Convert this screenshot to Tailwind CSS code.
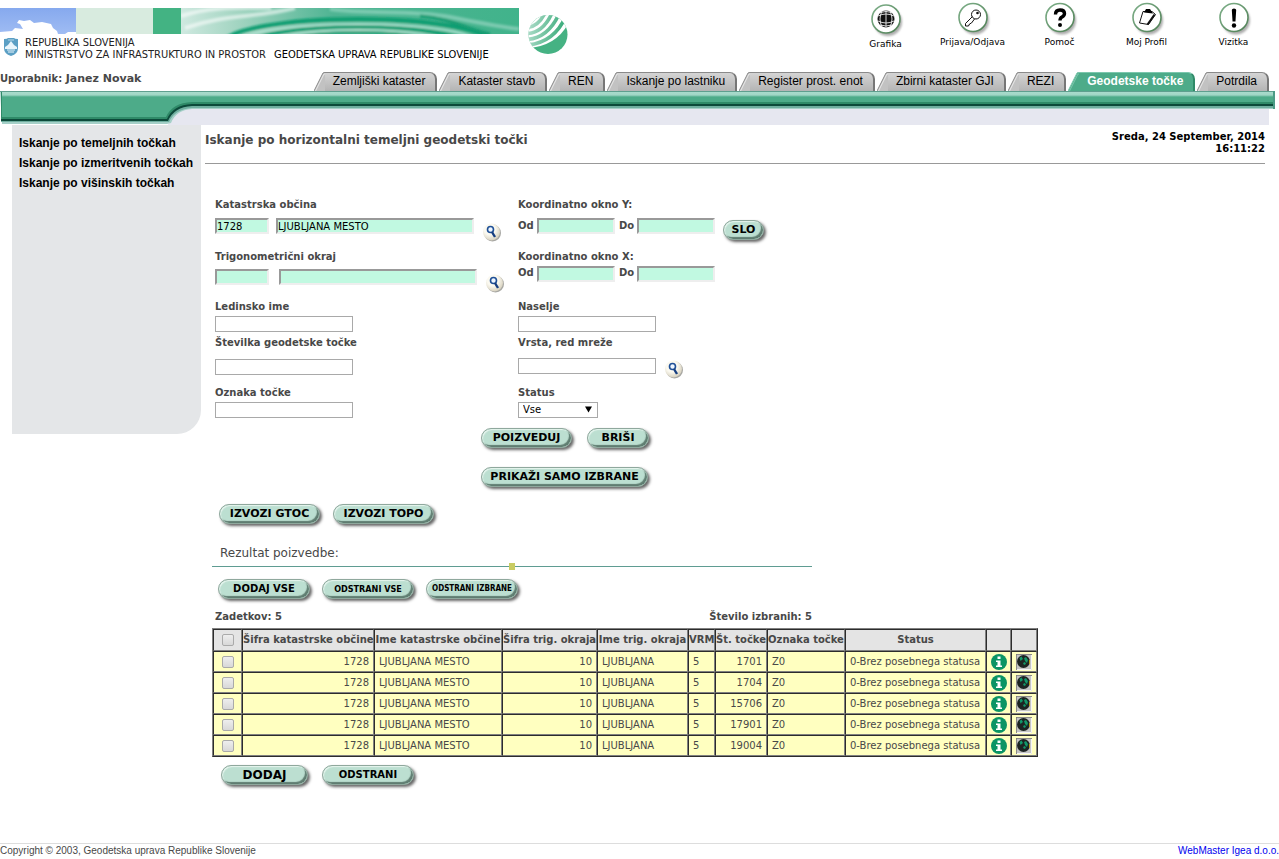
<!DOCTYPE html>
<html lang="sl">

<head>
    <meta charset="utf-8" />
    <meta content="width=device-width, initial-scale=1.0" name="viewport" />
    <title>Geodetske točke</title>
    <script src="https://cdn.jsdelivr.net/npm/@tailwindcss/browser@4"></script>
</head>

<body class="bg-white text-[#484848] font-['Verdana','DejaVu_Sans',sans-serif] text-[10px] leading-[14px]">
    <!-- Shared icons -->
    <svg class="absolute h-0 w-0">
        <defs>
            <linearGradient id="btnRing" x1="0" y1="0" x2="1" y2="1">
                <stop offset="0" stop-color="#7fb08a" />
                <stop offset="1" stop-color="#4f8055" />
            </linearGradient>
            <radialGradient id="lens" cx=".4" cy=".35" r=".65">
                <stop offset=".5" stop-color="#fbf9f0" />
                <stop offset="1" stop-color="#d8d2c0" />
            </radialGradient>
            <filter id="soft"><feGaussianBlur stdDeviation="1" /></filter>
        </defs>
        <symbol id="ic-search" viewBox="0 0 20 20">
            <circle cx="10.500" cy="11" r="8.500" fill="#8a8a84" opacity=".75" />
            <circle cx="9.500" cy="10" r="8.500" fill="url(#lens)" />
            <circle cx="8.500" cy="7.500" r="3" fill="#eef6ff" stroke="#1f4f96" stroke-width="1.600" />
            <path d="M10 10l3 5" stroke="#173f80" stroke-width="2.400" />
        </symbol>
        <symbol id="ic-info" viewBox="0 0 16 16">
            <circle cx="8" cy="8" r="8" fill="#0a9464" />
            <path d="M6.500 2.500h3v2.500h-3zM5 6.500h4.500v5H11V13H5v-1.500h1.500V8H5z" fill="#fff" />
        </symbol>
        <symbol id="ic-map" viewBox="0 0 16 16">
            <path d="M0 0h16v16H0z" fill="#c4c4c4" />
            <path d="M0 16V0h16" fill="none" stroke="#777" stroke-width="1.500" />
            <path d="M1 15.500h14.500V1" fill="none" stroke="#f4f4f4" />
            <circle cx="7.500" cy="7.500" r="6.500" fill="#1d2422" />
            <path d="M3.500 4l2-1.500L7 5 4.500 7zM8 4l2-1 2 3-1 3-2-2zM7 9l2-1 1 2-2 1z" fill="#13986a" />
            <path d="M13.500 6v4" stroke="#b4a020" />
        </symbol>
    </svg>

    <div class="flex min-h-screen flex-col">
        <header>
            <div class="flex h-[72px] items-start justify-between pt-[2px] pr-[2px]">
                <div class="flex pt-[6px]">
                    <div class="w-[519px]">
                        <svg class="block h-[26px] w-full" viewBox="0 0 519 26">
                            <defs>
                                <linearGradient id="sky" x1="0" y1="0" x2="0" y2="1">
                                    <stop offset="0" stop-color="#86a9ee" />
                                    <stop offset="1" stop-color="#9fbcf3" />
                                </linearGradient>
                                <linearGradient id="water" x1="0" y1="0" x2="1" y2="0">
                                    <stop offset="0" stop-color="#cfe9e0" />
                                    <stop offset=".18" stop-color="#9fd3bf" />
                                    <stop offset=".45" stop-color="#4fb493" />
                                    <stop offset="1" stop-color="#41b38b" />
                                </linearGradient>
                                <clipPath id="waterClip"><path d="M181 0h338v26H181z" /></clipPath>
                            </defs>
                            <path d="M0 0h76v26H0z" fill="url(#sky)" />
                            <path d="M0 26v-2l12-1 3-3 8 1-3-5-3-1 2-3 5 1 6-1 4 3 8-1 9 2 2 4 4 3 1 3 8 1v1z" fill="#fff" />
                            <path d="M65 26l3-2h8v2z" fill="#fff" />
                            <path d="M76 0h77v26H76z" fill="#d8ebdf" />
                            <path d="M153 0h28v26h-28z" fill="#43b383" />
                            <path d="M181 0h338v26H181z" fill="url(#water)" />
                            <g clip-path="url(#waterClip)" fill="none">
                                <g filter="url(#soft)">
                                    <path d="M181 8c30-10 60-8 90-8M185 20c40-14 70-10 110-20" stroke="#fff" stroke-opacity=".55" stroke-width="4" />
                                    <path d="M330 1c40 6 80 0 120 8s50 10 69 12" stroke="#7bcab0" stroke-width="4" />
                                    <ellipse cx="358" cy="36" rx="135" ry="25" stroke="#0f9d71" stroke-width="4" />
                                    <ellipse cx="358" cy="36" rx="122" ry="20" stroke="#b5e3d3" stroke-width="2" />
                                    <ellipse cx="358" cy="36" rx="108" ry="17" stroke="#0f9d71" stroke-width="3" />
                                    <ellipse cx="358" cy="36" rx="90" ry="14" stroke="#b5e3d3" stroke-width="2" />
                                    <ellipse cx="358" cy="36" rx="76" ry="12" stroke="#139b70" stroke-width="2" />
                                    <path d="M420 8c30 2 50 14 70 18" stroke="#159c72" stroke-width="3" />
                                </g>
                            </g>
                        </svg>
                        <div class="flex pt-[3px] pl-[3px] font-['DejaVu_Sans_Condensed','DejaVu_Sans',sans-serif] text-[11px] leading-[12px] text-[#222]">
                            <svg class="mr-[6px] h-[20px] w-[16px] shrink-0" viewBox="0 0 16 20">
                                <path d="M1 2q3.500 0 4-1h6q.5 1 4 1v9q0 6-7 8-7-2-7-8z" fill="#5b9fc4" />
                                <path d="M2 10l3-2 3-4 3 4 3 2v2H2z" fill="#e9f5fb" />
                                <path d="M4 13h8M5 15h6" stroke="#e9f5fb" />
                                <path d="M5 3h6" stroke="#b6d8e8" />
                            </svg>
                            <div class="flex items-end whitespace-nowrap">
                                <div>REPUBLIKA SLOVENIJA<br />MINISTRSTVO ZA INFRASTRUKTURO IN PROSTOR</div>
                                <div class="ml-[8px] text-black">GEODETSKA UPRAVA REPUBLIKE SLOVENIJE</div>
                            </div>
                        </div>
                    </div>
                    <svg class="mt-[6px] ml-[9px] h-[41px] w-[40px]" viewBox="0 0 40 41">
                        <defs>
                            <clipPath id="ball"><circle cx="20" cy="20.500" r="19.500" /></clipPath>
                            <linearGradient id="stripe" gradientUnits="userSpaceOnUse" x1="2" y1="8" x2="34" y2="14">
                                <stop offset="0" stop-color="#a9dac6" />
                                <stop offset="1" stop-color="#3fae7e" />
                            </linearGradient>
                        </defs>
                        <g clip-path="url(#ball)">
                            <path d="M0 0h40v41H0z" fill="#45b283" />
                            <path d="M42 6Q30 32 0 34V0h42z" fill="#fff" />
                            <g fill="none" stroke="url(#stripe)" stroke-width="3.600">
                                <path d="M-1 31Q26 29 38 2" />
                                <path d="M-1 25.500Q20 24 31 0" />
                                <path d="M-1 19.500Q15 19 24 -1" />
                                <path d="M-1 13.500Q10 13 17 -1" />
                            </g>
                        </g>
                    </svg>
                </div>

                <nav class="flex text-center font-['DejaVu_Sans',sans-serif] text-[9px] leading-[12px] text-black">
                    <a href="#" class="flex w-[87px] flex-col items-center">
                        <svg class="h-[36px] w-[36px]" viewBox="0 0 36 36">
                            <circle cx="20" cy="20" r="14" fill="#777" opacity=".6" filter="url(#soft)" />
                            <circle cx="18" cy="17" r="14" fill="#fff" stroke="url(#btnRing)" stroke-width="1.600" />
                            <circle cx="18" cy="17" r="8.500" fill="#111" />
                            <path d="M10 14q8-4 16 0M10 19q8 4 16 0M12 10.500q6-2 12 0M12 23q6 2 12 0M18 8.500v17M14 9q-4 8 0 16M22 9q4 8 0 16" fill="none" stroke="#eee" stroke-width=".9" />
                        </svg>
                        Grafika
                    </a>
                    <a href="#" class="flex w-[87px] flex-col items-center">
                        <svg class="h-[34px] w-[36px]" viewBox="0 0 36 34">
                            <circle cx="20" cy="18.500" r="14" fill="#777" opacity=".6" filter="url(#soft)" />
                            <circle cx="18" cy="15.500" r="14" fill="#fff" stroke="url(#btnRing)" stroke-width="1.600" />
                            <circle cx="21" cy="12.500" r="4.500" fill="none" stroke="#111" />
                            <circle cx="22.500" cy="11" r="1.300" fill="#111" />
                            <path d="M17.500 14.500l-7 7v2.500h3l1-2 2-1 3-4" fill="none" stroke="#111" />
                        </svg>
                        Prijava/Odjava
                    </a>
                    <a href="#" class="flex w-[87px] flex-col items-center">
                        <svg class="h-[34px] w-[36px]" viewBox="0 0 36 34">
                            <circle cx="20" cy="18.500" r="14" fill="#777" opacity=".6" filter="url(#soft)" />
                            <circle cx="18" cy="15.500" r="14" fill="#fff" stroke="url(#btnRing)" stroke-width="1.600" />
                            <path d="M13.500 12.500q0-4.500 4.500-4.500t4.500 3.500q0 2-2.500 3.500-2 1-2 3.500" fill="none" stroke="#000" stroke-width="3.400" />
                            <circle cx="18" cy="23" r="2" />
                        </svg>
                        Pomoč
                    </a>
                    <a href="#" class="flex w-[87px] flex-col items-center">
                        <svg class="h-[34px] w-[36px]" viewBox="0 0 36 34">
                            <circle cx="20" cy="18.500" r="14" fill="#777" opacity=".6" filter="url(#soft)" />
                            <circle cx="18" cy="15.500" r="14" fill="#fff" stroke="url(#btnRing)" stroke-width="1.600" />
                            <path d="M14 9.500h9l3.500 3-7 10-9-1.500z" fill="#fff" stroke="#111" />
                            <path d="M15 10.500l2-3.500h4l3 4.500z" />
                            <path d="M25.500 12.500l-7 10" stroke="#111" stroke-width="2" />
                        </svg>
                        Moj Profil
                    </a>
                    <a href="#" class="flex w-[87px] flex-col items-center">
                        <svg class="h-[34px] w-[36px]" viewBox="0 0 36 34">
                            <circle cx="20" cy="18.500" r="14" fill="#777" opacity=".6" filter="url(#soft)" />
                            <circle cx="18" cy="15.500" r="14" fill="#fff" stroke="url(#btnRing)" stroke-width="1.600" />
                            <path d="M15.800 8q0-1.500 2.200-1.500T20.200 8l-.7 11.500h-3z" />
                            <circle cx="18" cy="23.500" r="2.200" />
                        </svg>
                        Vizitka
                    </a>
                </nav>
            </div>

            <div class="flex items-end justify-between pr-[10px]">
                <p class="pb-[5px] font-bold">Uporabnik: <span class="text-[11px]">Janez Novak</span></p>
                <nav id="tabs" class="flex gap-[2px] font-['Liberation_Sans',Arial,sans-serif] text-[12px] leading-[17px] text-black"></nav>
            </div>

            <!-- Green bar with the drop on the left -->
            <div class="flex pr-[4px]">
                <svg class="block h-[34px] w-[200px] shrink-0" viewBox="0 0 200 34">
                    <defs>
                        <linearGradient id="bar" gradientUnits="userSpaceOnUse" x1="0" y1="0" x2="0" y2="18">
                            <stop offset=".055" stop-color="#a9dbcc" />
                            <stop offset=".22" stop-color="#a0d6c5" />
                            <stop offset=".33" stop-color="#4dab89" />
                        </linearGradient>
                    </defs>
                    <path d="M168 34Q172 20 192 17h8v17z" fill="#e6e7f0" />
                    <path d="M0 0h200v18h-8q-16 1-21 14l-4 1H2z" fill="#a5d0c8" />
                    <path d="M1 1h199v16h-8q-17 1-23 14H1z" fill="#6fae9f" />
                    <path d="M1 1h199v14h-8q-18 1-24 15H1z" fill="#0c4a3a" />
                    <path d="M1 1h199v12h-8q-19 1-25 15H1z" fill="#2f8a68" />
                    <path d="M2 1h198v10h-8q-20 1-26 15H2z" fill="url(#bar)" />
                    <path d="M0 .5h200" stroke="#5f9f8f" />
                </svg>
                <div class="flex-1">
                    <div class="h-[18px] border-r-2 border-[#4b9b86] bg-[linear-gradient(#5f9f8f_0px,#5f9f8f_1px,#a9dbcc_1px,#a0d6c5_4px,#4dab89_6px,#4dab89_11px,#2f8a68_11px,#2f8a68_13px,#0c4a3a_13px,#0c4a3a_15px,#6fae9f_15px,#6fae9f_17px,#a5d0c8_17px)]"></div>
                    <div class="mr-[6px] h-[16px] bg-[#e6e7f0]"></div>
                </div>
            </div>
        </header>

        <div class="flex flex-1 items-start pl-[12px]">
            <aside class="h-[309px] w-[189px] shrink-0 rounded-br-[24px] bg-[#e4e6e8] pt-[8px] pl-[7px]">
                <ul class="font-['Liberation_Sans',Arial,sans-serif] text-[12px] leading-[20px] font-bold whitespace-nowrap text-black">
                    <li><a href="#">Iskanje po temeljnih točkah</a></li>
                    <li><a href="#">Iskanje po izmeritvenih točkah</a></li>
                    <li><a href="#">Iskanje po višinskih točkah</a></li>
                </ul>
            </aside>

            <main class="flex-1 pr-[14px] pl-[4px]">
                <div class="flex h-[39px] items-start justify-between border-b border-[#999] pt-[6px] font-bold">
                    <h1 class="text-[12px] leading-[18px]">Iskanje po horizontalni temeljni geodetski točki</h1>
                    <div class="text-right leading-[12px] text-black">Sreda, 24 September, 2014<br />16:11:22</div>
                </div>

                <form class="pt-[34px] pl-[10px]">
                    <div class="grid grid-cols-[303px_1fr] grid-rows-[52px_50px_36px_50px_42px] font-bold">
                        <div>
                            <label for="ko" class="block">Katastrska občina</label>
                            <div class="flex items-start pt-[6px]">
                                <input id="ko" value="1728" class="h-[16px] w-[54px] border-2 border-t-[#999] border-r-[#eee] border-b-[#eee] border-l-[#999] bg-[#c1f9e1] font-normal text-black" />
                                <input aria-label="Ime občine" value="LJUBLJANA MESTO" class="ml-[7px] h-[16px] w-[198px] border-2 border-t-[#999] border-r-[#eee] border-b-[#eee] border-l-[#999] bg-[#c1f9e1] font-normal text-black" />
                                <button type="button" aria-label="Išči" class="mt-[4px] ml-[8px]"><svg class="block h-[20px] w-[20px]"><use href="#ic-search" /></svg></button>
                            </div>
                        </div>
                        <div>
                            <label for="yod" class="block">Koordinatno okno Y:</label>
                            <div class="flex items-start pt-[6px]">
                                <label for="yod" class="w-[19px] leading-[16px]">Od</label>
                                <input id="yod" class="h-[16px] w-[78px] border-2 border-t-[#999] border-r-[#eee] border-b-[#eee] border-l-[#999] bg-[#c1f9e1] font-normal text-black" />
                                <label for="ydo" class="w-[22px] pl-[4px] leading-[16px]">Do</label>
                                <input id="ydo" class="h-[16px] w-[78px] border-2 border-t-[#999] border-r-[#eee] border-b-[#eee] border-l-[#999] bg-[#c1f9e1] font-normal text-black" />
                                <button type="button" class="mt-[2px] ml-[8px] h-[20px] w-[41px] rounded-full border border-[#8fa89d] bg-[#bcdfd1] text-[11px] leading-[18px] font-bold text-black shadow-[2px_2px_3px_#666,inset_1px_1px_1px_#e6f5ee,inset_-2px_-2px_1px_#5f7d71]">SLO</button>
                            </div>
                        </div>
                        <div>
                            <label for="to" class="block">Trigonometrični okraj</label>
                            <div class="flex items-start pt-[5px]">
                                <input id="to" class="h-[16px] w-[54px] border-2 border-t-[#999] border-r-[#eee] border-b-[#eee] border-l-[#999] bg-[#c1f9e1] font-normal text-black" />
                                <input aria-label="Ime okraja" class="ml-[10px] h-[16px] w-[198px] border-2 border-t-[#999] border-r-[#eee] border-b-[#eee] border-l-[#999] bg-[#c1f9e1] font-normal text-black" />
                                <button type="button" aria-label="Išči" class="mt-[4px] ml-[8px]"><svg class="block h-[20px] w-[20px]"><use href="#ic-search" /></svg></button>
                            </div>
                        </div>
                        <div>
                            <label for="xod" class="block">Koordinatno okno X:</label>
                            <div class="flex items-start pt-[2px]">
                                <label for="xod" class="w-[19px]">Od</label>
                                <input id="xod" class="h-[16px] w-[78px] border-2 border-t-[#999] border-r-[#eee] border-b-[#eee] border-l-[#999] bg-[#c1f9e1] font-normal text-black" />
                                <label for="xdo" class="w-[22px] pl-[4px]">Do</label>
                                <input id="xdo" class="h-[16px] w-[78px] border-2 border-t-[#999] border-r-[#eee] border-b-[#eee] border-l-[#999] bg-[#c1f9e1] font-normal text-black" />
                            </div>
                        </div>
                        <div>
                            <label for="li" class="block">Ledinsko ime</label>
                            <input id="li" class="mt-[2px] block h-[16px] w-[138px] border border-[#a9a9a9] bg-white font-normal text-black" />
                        </div>
                        <div>
                            <label for="na" class="block">Naselje</label>
                            <input id="na" class="mt-[2px] block h-[16px] w-[138px] border border-[#a9a9a9] bg-white font-normal text-black" />
                        </div>
                        <div>
                            <label for="sg" class="block">Številka geodetske točke</label>
                            <input id="sg" class="mt-[9px] block h-[16px] w-[138px] border border-[#a9a9a9] bg-white font-normal text-black" />
                        </div>
                        <div>
                            <label for="vr" class="block">Vrsta, red mreže</label>
                            <div class="flex items-start pt-[8px]">
                                <input id="vr" class="block h-[16px] w-[138px] border border-[#a9a9a9] bg-white font-normal text-black" />
                                <button type="button" aria-label="Išči" class="mt-[1px] ml-[8px]"><svg class="block h-[20px] w-[20px]"><use href="#ic-search" /></svg></button>
                            </div>
                        </div>
                        <div>
                            <label for="oz" class="block">Oznaka točke</label>
                            <input id="oz" class="mt-[2px] block h-[16px] w-[138px] border border-[#a9a9a9] bg-white font-normal text-black" />
                        </div>
                        <div>
                            <label for="st" class="block">Status</label>
                            <div class="relative mt-[2px] w-[80px]">
                                <select id="st" class="block h-[16px] w-full appearance-none border border-[#a9a9a9] bg-white pl-[4px] font-normal text-black">
                                    <option>Vse</option>
                                </select>
                                <svg class="pointer-events-none absolute top-[4px] right-[6px] h-[7px] w-[7px]" viewBox="0 0 8 7"><path d="M0 0h8L4 7z" /></svg>
                            </div>
                        </div>
                    </div>

                    <div class="flex gap-[15px] pl-[266px] text-[11px] leading-[18px] font-bold text-black">
                        <button type="button" class="h-[20px] w-[91px] rounded-full border border-[#8fa89d] bg-[#bcdfd1] shadow-[2px_2px_3px_#666,inset_1px_1px_1px_#e6f5ee,inset_-2px_-2px_1px_#5f7d71]">POIZVEDUJ</button>
                        <button type="button" class="h-[20px] w-[62px] rounded-full border border-[#8fa89d] bg-[#bcdfd1] shadow-[2px_2px_3px_#666,inset_1px_1px_1px_#e6f5ee,inset_-2px_-2px_1px_#5f7d71]">BRIŠI</button>
                    </div>
                    <div class="flex pt-[19px] pl-[266px] text-[11px] leading-[18px] font-bold text-black">
                        <button type="button" class="h-[20px] w-[167px] rounded-full border border-[#8fa89d] bg-[#bcdfd1] whitespace-nowrap shadow-[2px_2px_3px_#666,inset_1px_1px_1px_#e6f5ee,inset_-2px_-2px_1px_#5f7d71]">PRIKAŽI SAMO IZBRANE</button>
                    </div>
                    <div class="flex gap-[13px] pt-[17px] pl-[4px] text-[11px] leading-[18px] font-bold text-black">
                        <button type="button" class="h-[20px] w-[101px] rounded-full border border-[#8fa89d] bg-[#bcdfd1] whitespace-nowrap shadow-[2px_2px_3px_#666,inset_1px_1px_1px_#e6f5ee,inset_-2px_-2px_1px_#5f7d71]">IZVOZI GTOC</button>
                        <button type="button" class="h-[20px] w-[101px] rounded-full border border-[#8fa89d] bg-[#bcdfd1] whitespace-nowrap shadow-[2px_2px_3px_#666,inset_1px_1px_1px_#e6f5ee,inset_-2px_-2px_1px_#5f7d71]">IZVOZI TOPO</button>
                    </div>
                </form>

                <section class="pl-[7px]">
                    <div class="relative w-[600px] border-b border-[#5f9c92] pt-[21px] pb-[5px] pl-[8px]">
                        <h2 class="text-[12px] leading-[16px]">Rezultat poizvedbe:</h2>
                        <span class="absolute bottom-[-4px] left-1/2 ml-[-3px] h-[7px] w-[6px] bg-[#c9cc63]"></span>
                    </div>
                    <div class="flex gap-[12px] pt-[12px] pl-[6px] text-[9px] leading-[18px] font-bold text-black">
                        <button type="button" class="h-[20px] w-[92px] rounded-full border border-[#8fa89d] bg-[#bcdfd1] text-[10px] whitespace-nowrap shadow-[2px_2px_3px_#666,inset_1px_1px_1px_#e6f5ee,inset_-2px_-2px_1px_#5f7d71]">DODAJ VSE</button>
                        <button type="button" class="h-[20px] w-[92px] rounded-full border border-[#8fa89d] bg-[#bcdfd1] font-['DejaVu_Sans_Condensed','DejaVu_Sans',sans-serif] whitespace-nowrap shadow-[2px_2px_3px_#666,inset_1px_1px_1px_#e6f5ee,inset_-2px_-2px_1px_#5f7d71]">ODSTRANI VSE</button>
                        <button type="button" class="h-[20px] w-[92px] rounded-full border border-[#8fa89d] bg-[#bcdfd1] font-['DejaVu_Sans_Condensed','DejaVu_Sans',sans-serif] text-[8px] whitespace-nowrap shadow-[2px_2px_3px_#666,inset_1px_1px_1px_#e6f5ee,inset_-2px_-2px_1px_#5f7d71]">ODSTRANI IZBRANE</button>
                    </div>
                    <div class="flex w-[600px] items-end justify-between pt-[11px] pb-[4px] pl-[3px] font-bold">
                        <span>Zadetkov: 5</span>
                        <span>Število izbranih: 5</span>
                    </div>

                    <table class="w-[826px] table-fixed border-separate border-spacing-0 border border-t-[#808080] border-r-[#2c2c2c] border-b-[#2c2c2c] border-l-[#808080] whitespace-nowrap">
                        <colgroup>
                            <col class="w-[29px]" />
                            <col class="w-[132px]" />
                            <col class="w-[128px]" />
                            <col class="w-[95px]" />
                            <col class="w-[91px]" />
                            <col class="w-[27px]" />
                            <col class="w-[52px]" />
                            <col class="w-[78px]" />
                            <col class="w-[141px]" />
                            <col class="w-[25px]" />
                            <col class="w-[26px]" />
                        </colgroup>
                        <thead id="head" class="bg-[#e4e4e4]"></thead>
                        <tbody id="rows" class="bg-[#ffffc0]"></tbody>
                    </table>

                    <div class="flex gap-[14px] pt-[8px] pl-[9px] text-[10px] leading-[18px] font-bold text-black">
                        <button type="button" class="h-[20px] w-[87px] rounded-full border border-[#8fa89d] bg-[#bcdfd1] text-[12px] shadow-[2px_2px_3px_#666,inset_1px_1px_1px_#e6f5ee,inset_-2px_-2px_1px_#5f7d71]">DODAJ</button>
                        <button type="button" class="h-[20px] w-[92px] rounded-full border border-[#8fa89d] bg-[#bcdfd1] shadow-[2px_2px_3px_#666,inset_1px_1px_1px_#e6f5ee,inset_-2px_-2px_1px_#5f7d71]">ODSTRANI</button>
                    </div>
                </section>
            </main>
        </div>

        <footer class="flex justify-between border-t border-[#ddd] pb-[2px] font-['Liberation_Sans',Arial,sans-serif] text-[10px] leading-[13px]">
            <span>Copyright © 2003, Geodetska uprava Republike Slovenije</span>
            <a href="#" class="text-[#0000ee]">WebMaster Igea d.o.o.</a>
        </footer>
    </div>

    <script>
        const tabs = ["Zemljiški kataster", "Kataster stavb", "REN", "Iskanje po lastniku", "Register prost. enot", "Zbirni kataster GJI", "REZI", "Geodetske točke", "Potrdila"];
        const active = "Geodetske točke";

        document.getElementById("tabs").innerHTML = tabs.map(name => {
            const on = name === active;
            return `
            <a href="#" class="flex h-[19px] whitespace-nowrap ${on ? "font-bold text-white" : ""}">
                <svg class="h-[19px] w-[11px]" viewBox="0 0 11 19">
                    <path d="M0 19L9 1q1-1 2-1v19z" fill="${on ? "#4dab89" : "#c2c2c2"}" />
                    <path d="M0 19L9 1q1-.5 2-.5" fill="none" stroke="${on ? "#7cc7ad" : "#8a8a8a"}" />
                    <path d="M1.500 19L10 2h1" fill="none" stroke="${on ? "#7cc7ad" : "#e8e8e8"}" />
                </svg>
                <span class="rounded-tr-[7px] border-t border-r-2 pr-[10px] pl-[8px] ${on ? "border-t-[#7cc7ad] border-r-[#2f8a68] bg-[#4dab89]" : "border-t-[#8a8a8a] border-r-[#777] bg-linear-to-b from-[#d4d4d4] to-[#b4b4b4]"}">${name}</span>
            </a>`;
        }).join("");

        const heads = ["Šifra katastrske občine", "Ime katastrske občine", "Šifra trig. okraja", "Ime trig. okraja", "VRM", "Št. točke", "Oznaka točke", "Status", "", ""];
        const cell = "border border-t-[#2c2c2c] border-r-[#808080] border-b-[#808080] border-l-[#2c2c2c]";
        const box = `<input type="checkbox" aria-label="Izberi" class="mx-auto block h-[12px] w-[12px] appearance-none rounded-[2px] border border-[#aaa] bg-linear-to-b from-[#eee] to-[#d8d8d8]" />`;

        document.getElementById("head").innerHTML = `
            <tr class="h-[22px]">
                <th class="${cell}">${box}</th>
                ${heads.map(h => `<th class="${cell} font-bold">${h}</th>`).join("")}
            </tr>`;

        document.getElementById("rows").innerHTML = ["1701", "1704", "15706", "17901", "19004"].map(num => `
            <tr class="h-[21px]">
                <td class="${cell}">${box}</td>
                <td class="${cell} pr-[4px] text-right">1728</td>
                <td class="${cell} pl-[4px]">LJUBLJANA MESTO</td>
                <td class="${cell} pr-[4px] text-right">10</td>
                <td class="${cell} pl-[4px]">LJUBLJANA</td>
                <td class="${cell} pl-[4px]">5</td>
                <td class="${cell} pr-[4px] text-right">${num}</td>
                <td class="${cell} pl-[4px]">Z0</td>
                <td class="${cell} pl-[4px]">0-Brez posebnega statusa</td>
                <td class="${cell}"><a href="#" aria-label="Info"><svg class="mx-auto block h-[16px] w-[16px]"><use href="#ic-info" /></svg></a></td>
                <td class="${cell}"><a href="#" aria-label="Karta"><svg class="mx-auto block h-[16px] w-[16px]"><use href="#ic-map" /></svg></a></td>
            </tr>`).join("");
    </script>
</body>

</html>
